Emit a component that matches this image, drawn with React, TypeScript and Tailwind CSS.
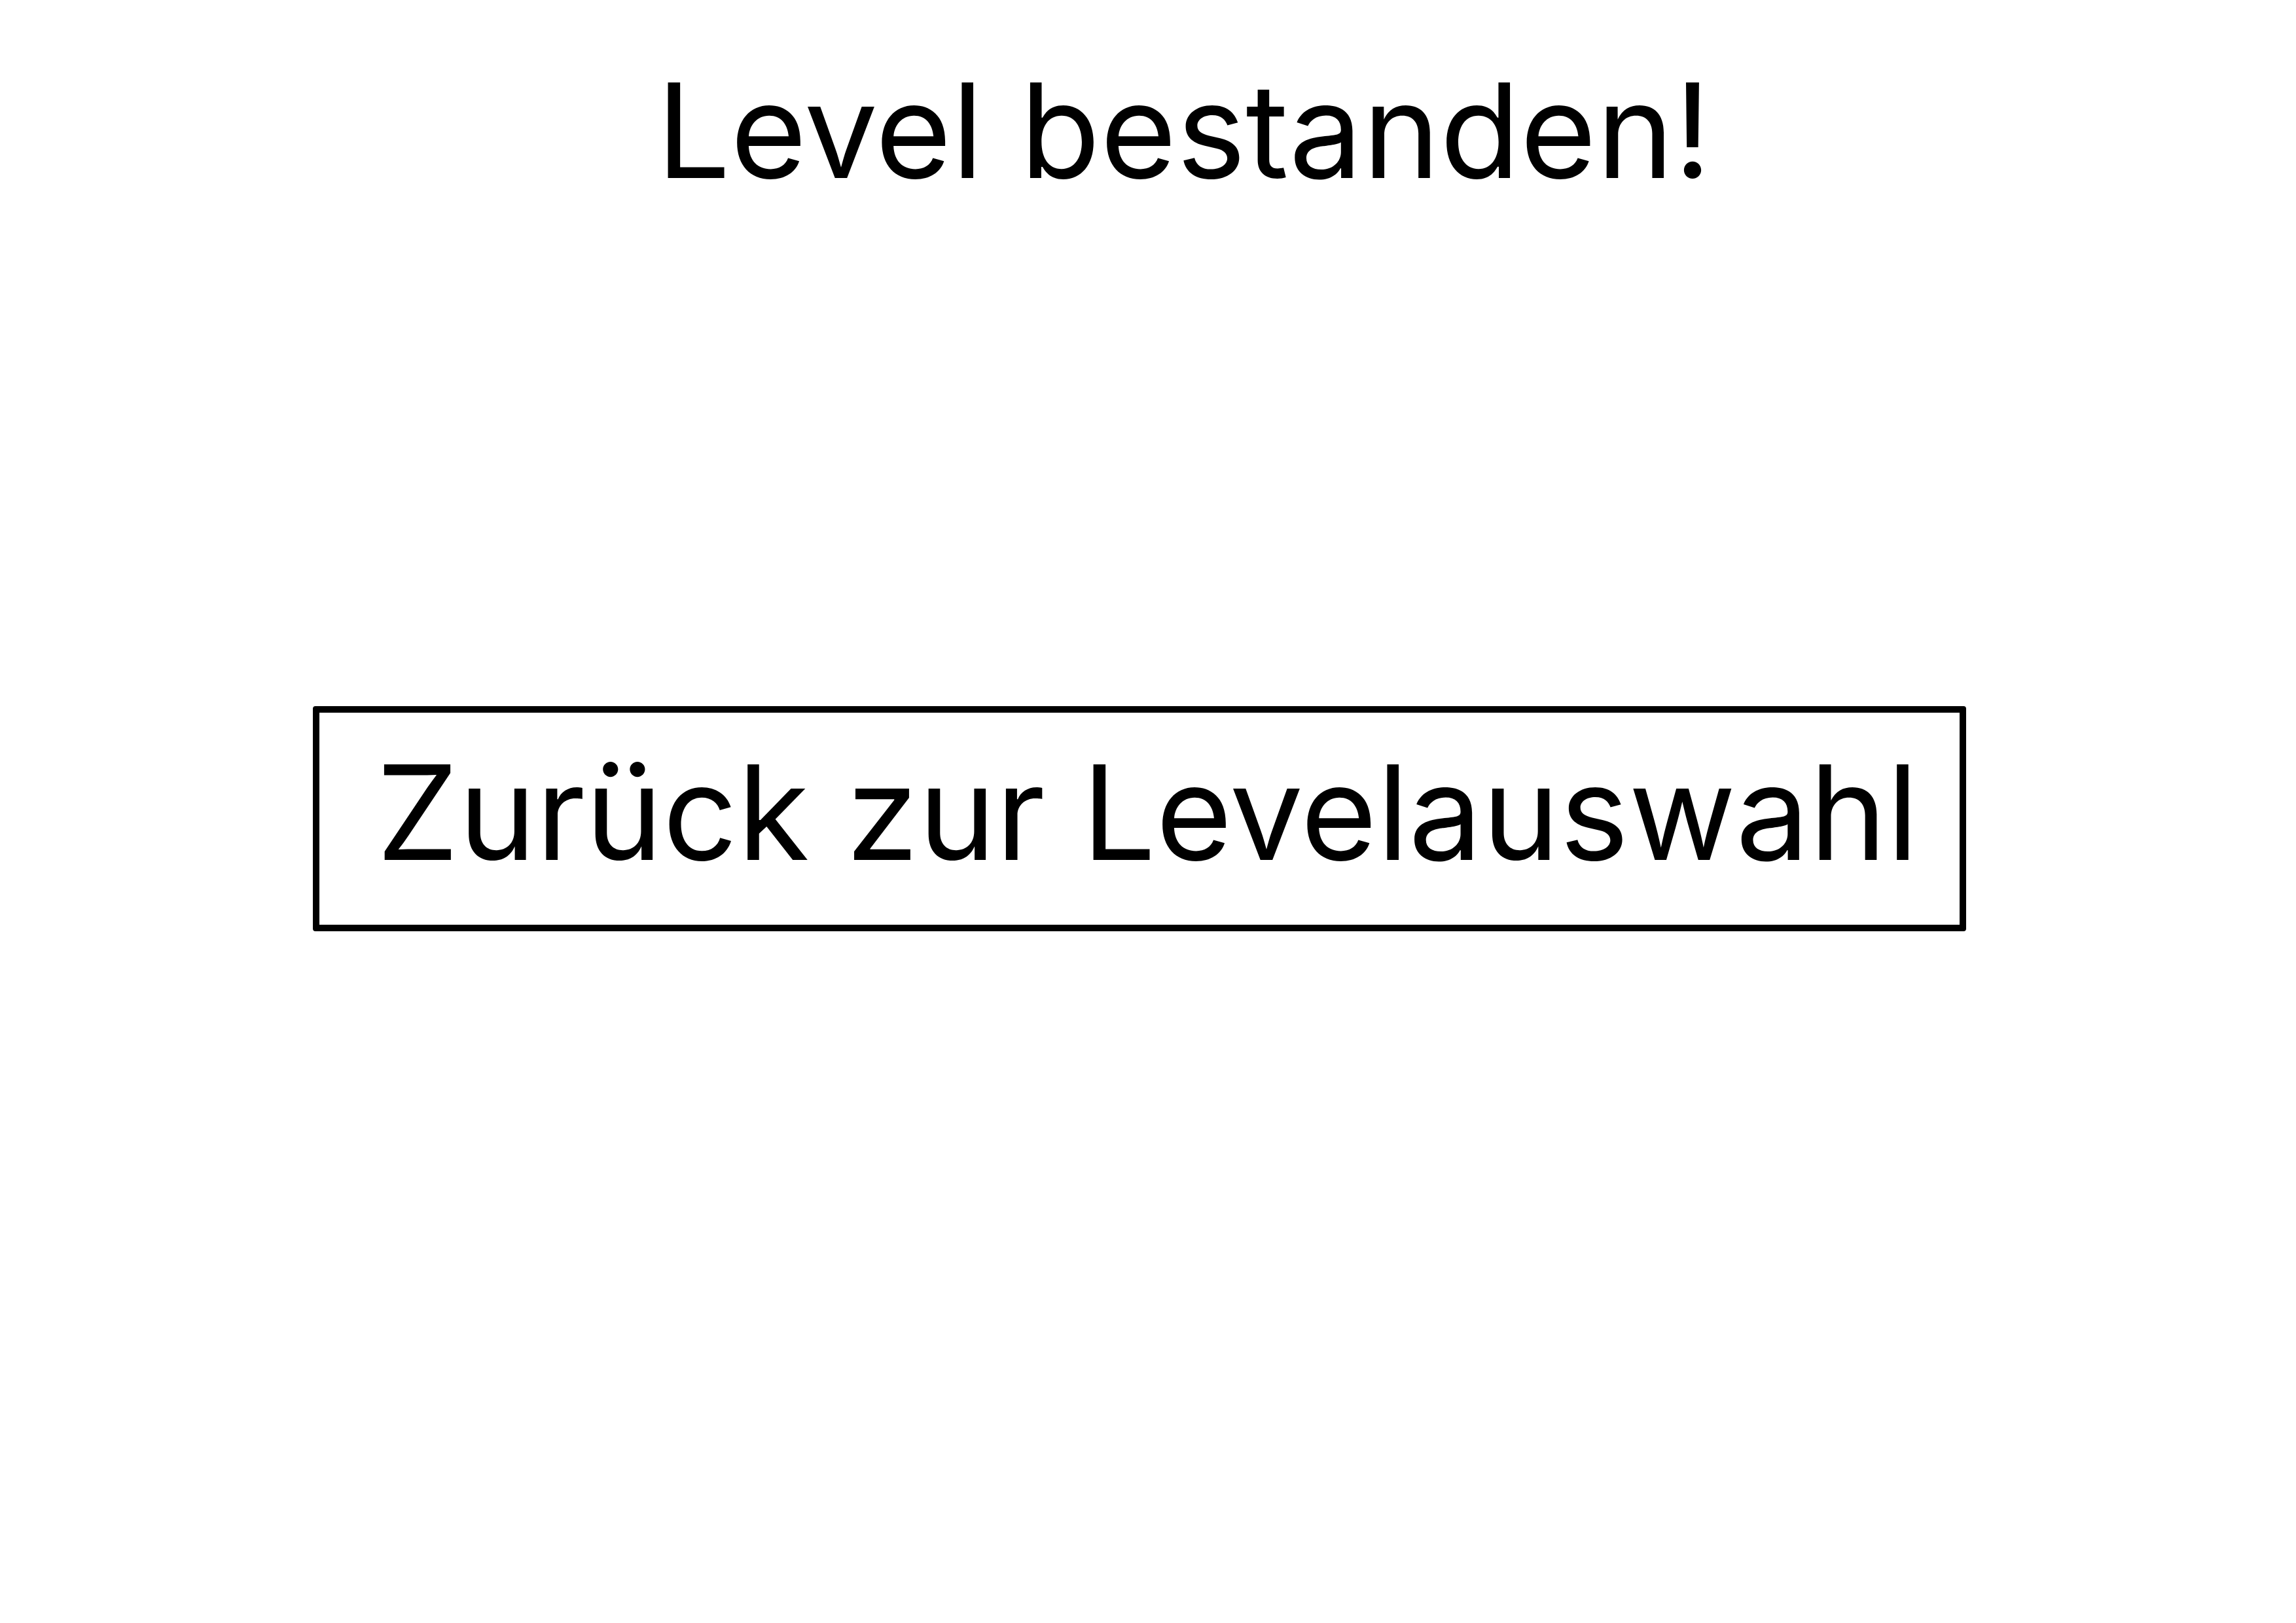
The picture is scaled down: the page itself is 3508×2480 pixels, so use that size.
import React from 'react';

const font = { fontFamily: 'Inter, "Liberation Sans", sans-serif' };

export default function App() {
  return (
    <div className="w-[3508px] h-[2480px] bg-white text-black" style={font}>
      <div className="flex flex-col items-start">
        <h1 className="mt-[99px] ml-[1003px] text-[200px] font-normal leading-none">Level bestanden!</h1>
        <button
          type="button"
          className="mt-[780px] ml-[478px] w-[2526px] h-[344px] border-[10px] border-black rounded-[4px] bg-white pl-[24px] pb-[20px] text-center text-[200px] leading-none"
        >
          Zurück zur Levelauswahl
        </button>
      </div>
    </div>
  );
}
